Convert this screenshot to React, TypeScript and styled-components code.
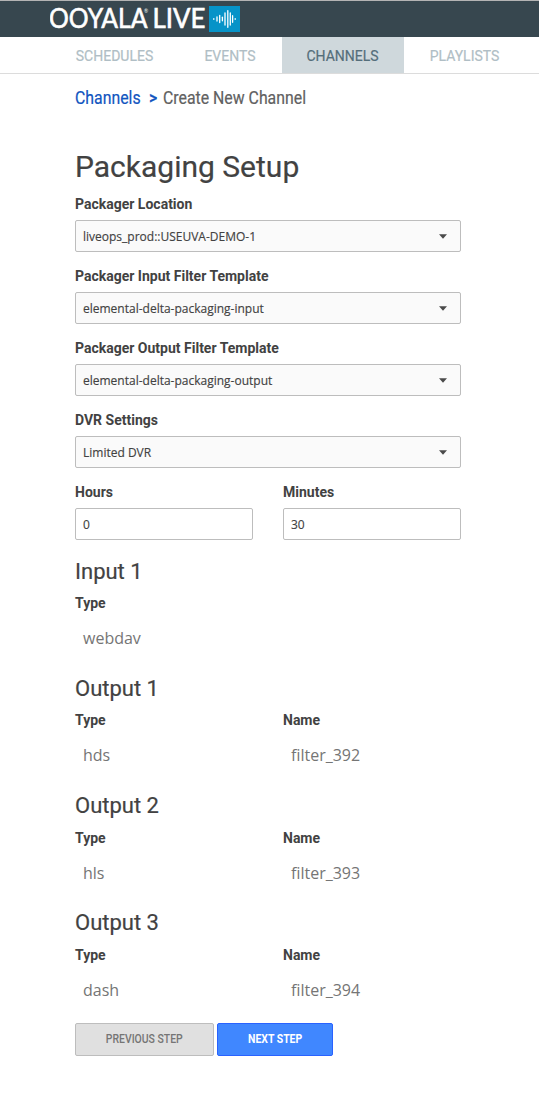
import React from "react";
import styled, { createGlobalStyle } from "styled-components";

const GlobalStyle = createGlobalStyle`
  * { box-sizing: border-box; }
  body { margin: 0; background: #fff; font-family: Roboto, "Liberation Sans", sans-serif; color: #424242; }
`;

const Page = styled.div`
  width: 539px;
  height: 1104px;
  overflow: hidden;
`;

const TopBar = styled.header`
  height: 37px;
  padding-left: 50px;
  background: #37474f;
  border-top: 1px solid #b4b4b4;
`;

const Logo = styled.svg`
  display: block;
`;

const Nav = styled.nav`
  display: flex;
  height: 37px;
  padding-left: 51px;
  border-bottom: 1px solid #dcdcdc;
`;

const Tab = styled.a<{ $width: number; $active?: boolean }>`
  width: ${(p) => p.$width}px;
  height: 36px;
  padding-right: 1px;
  line-height: 39px;
  text-align: center;
  font-size: 14px;
  -webkit-text-stroke: 0.2px currentColor;
  color: ${(p) => (p.$active ? "#546e7a" : "#b0bec5")};
  background: ${(p) => (p.$active ? "#cfd8dc" : "transparent")};
`;

const Content = styled.main`
  width: 386px;
  margin-left: 75px;
`;

const Breadcrumb = styled.div`
  display: flex;
  height: 48px;
  line-height: 48px;
  font-size: 18px;
  -webkit-text-stroke: 0.2px currentColor;
`;

const Crumb = styled.span<{ $width: number; $link?: boolean; $strong?: boolean }>`
  width: ${(p) => p.$width}px;
  white-space: nowrap;
  transform: scaleX(0.88);
  transform-origin: 0 50%;
  font-weight: ${(p) => (p.$strong ? 500 : 400)};
  color: ${(p) => (p.$link ? "#1155c0" : "#616161")};
`;

const Title = styled.h1`
  margin: 24px 0 0;
  height: 41px;
  line-height: 42px;
  font-size: 30px;
  font-weight: 400;
  -webkit-text-stroke: 0.2px currentColor;
`;

const Field = styled.div`
  flex: 1;
  height: 72px;
`;

const Label = styled.label`
  display: block;
  height: 33px;
  line-height: 34px;
  font-size: 14px;
  font-weight: 700;
`;

const Control = styled.div<{ $plain?: boolean }>`
  display: flex;
  align-items: center;
  justify-content: space-between;
  height: 32px;
  padding: 0 13px 0 7px;
  border: 1px solid #bdbdbd;
  border-radius: 2px;
  background: ${(p) => (p.$plain ? "#fff" : "#fafafa")};
  font: 12px "Open Sans", sans-serif;
  -webkit-text-stroke: 0.15px currentColor;
`;

const Caret = styled.svg`
  display: block;
`;

const Columns = styled.div`
  display: flex;
  gap: 30px;
`;

const Streams = styled.div`
  margin: 9px 0 -1.6px;
`;

const Section = styled.section`
  height: 117.15px;
`;

const Heading = styled.h2`
  margin: 0;
  height: 30.3px;
  line-height: 32px;
  font-size: 22px;
  font-weight: 400;
  -webkit-text-stroke: 0.2px currentColor;
`;

const Value = styled.div`
  margin-top: 1px;
  padding-left: 8px;
  font: 16px/36px "Open Sans", sans-serif;
  color: #757575;
`;

const Actions = styled.div`
  display: flex;
  gap: 3px;
`;

const Button = styled.button<{ $primary?: boolean }>`
  width: ${(p) => (p.$primary ? 116 : 139)}px;
  height: 33px;
  padding: 0;
  border: 1px solid ${(p) => (p.$primary ? "#2962ff" : "#bdbdbd")};
  border-radius: 2px;
  background: ${(p) => (p.$primary ? "#4087ff" : "#e0e0e0")};
  color: ${(p) => (p.$primary ? "#fff" : "#757575")};
  font: ${(p) => (p.$primary ? 700 : 500)} 12px/31px Roboto, sans-serif;
`;

const Condensed = styled.span`
  display: inline-block;
  transform: scaleX(0.87);
`;

const tabs = [
  { label: "SCHEDULES", width: 128 },
  { label: "EVENTS", width: 103 },
  { label: "CHANNELS", width: 122, active: true },
  { label: "PLAYLISTS", width: 122 },
];

const selects = [
  { label: "Packager Location", value: "liveops_prod::USEUVA-DEMO-1" },
  { label: "Packager Input Filter Template", value: "elemental-delta-packaging-input" },
  { label: "Packager Output Filter Template", value: "elemental-delta-packaging-output" },
  { label: "DVR Settings", value: "Limited DVR" },
];

const streams = [
  { title: "Input 1", type: "webdav" },
  { title: "Output 1", type: "hds", name: "filter_392" },
  { title: "Output 2", type: "hls", name: "filter_393" },
  { title: "Output 3", type: "dash", name: "filter_394" },
];

// x position and half height of each bar in the sound wave mark
const bars = [
  [4.8, 0.3], [8, 2], [10.7, 3.5], [13.4, 1.8], [16, 6], [18.8, 8.3], [21.3, 6], [23.6, 3.3], [26.2, 0.3],
];

function Brand() {
  return (
    <Logo width="192" height="36" viewBox="0 0 192 36">
      <g fill="#fff" stroke="#fff" strokeWidth="0.6" fontFamily="Lato, sans-serif" fontSize="26">
        <text x="-1" y="27" textLength="98.5" lengthAdjust="spacingAndGlyphs">OOYALA</text>
        <text x="102.5" y="27" textLength="53" lengthAdjust="spacingAndGlyphs">LIVE</text>
        <text x="94" y="12" fontSize="5" stroke="none">®</text>
      </g>
      <rect x="159" y="5" width="31" height="26" fill="#0693c8" />
      <g stroke="#fff" strokeWidth="1.3" strokeLinecap="round">
        {bars.map(([x, h]) => (
          <path key={x} d={`M${159 + x} ${18 - h}v${h * 2}`} />
        ))}
      </g>
    </Logo>
  );
}

export default function App() {
  return (
    <Page>
      <GlobalStyle />
      <TopBar>
        <Brand />
      </TopBar>
      <Nav>
        {tabs.map((t) => (
          <Tab key={t.label} $width={t.width} $active={t.active}>{t.label}</Tab>
        ))}
      </Nav>
      <Content>
        <Breadcrumb>
          <Crumb $width={74} $link>Channels</Crumb>
          <Crumb $width={13.5} $link $strong>&gt;</Crumb>
          <Crumb $width={160}>Create New Channel</Crumb>
        </Breadcrumb>
        <Title>Packaging Setup</Title>
        {selects.map((s) => (
          <Field key={s.label}>
            <Label>{s.label}</Label>
            <Control>
              {s.value}
              <Caret width="8" height="5" viewBox="0 0 8 5"><path d="M0 .3h8L4 4.8z" fill="#4a4a4a" /></Caret>
            </Control>
          </Field>
        ))}
        <Columns>
          <Field><Label>Hours</Label><Control $plain>0</Control></Field>
          <Field><Label>Minutes</Label><Control $plain>30</Control></Field>
        </Columns>
        <Streams>
          {streams.map((s) => (
            <Section key={s.title}>
              <Heading>{s.title}</Heading>
              <Columns>
                <Field><Label>Type</Label><Value>{s.type}</Value></Field>
                <Field>{s.name && <><Label>Name</Label><Value>{s.name}</Value></>}</Field>
              </Columns>
            </Section>
          ))}
        </Streams>
        <Actions>
          <Button><Condensed>PREVIOUS STEP</Condensed></Button>
          <Button $primary><Condensed>NEXT STEP</Condensed></Button>
        </Actions>
      </Content>
    </Page>
  );
}
